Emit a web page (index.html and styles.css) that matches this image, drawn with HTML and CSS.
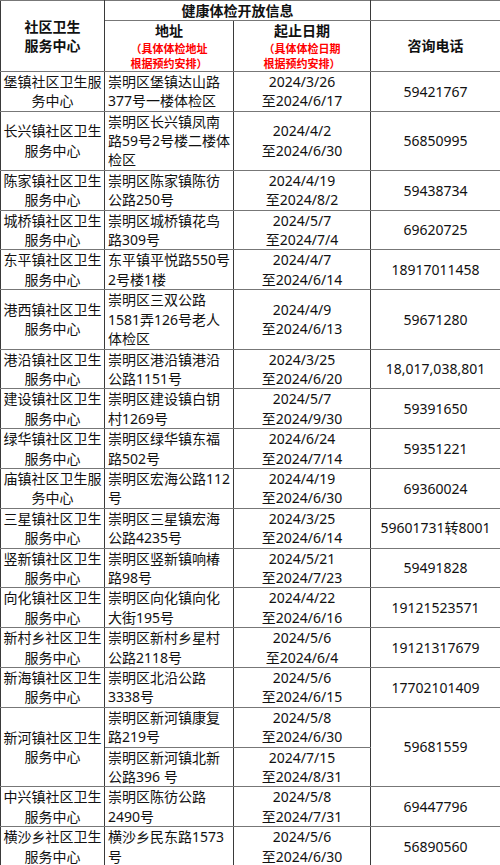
FILE: index.html
```html
<!DOCTYPE html>
<html lang="zh-CN">
<head>
<meta charset="utf-8">
<title>健康体检开放信息</title>
<link rel="stylesheet" href="styles.css">
</head>
<body>
<table class="sheet">
  <colgroup>
    <col class="c-name">
    <col class="c-addr">
    <col class="c-date">
    <col class="c-phone">
  </colgroup>
  <thead>
    <tr class="h1">
      <th rowspan="2" class="name">社区卫生<br>服务中心</th>
      <th colspan="2" class="group">健康体检开放信息</th>
      <th class="empty"></th>
    </tr>
    <tr class="h2">
      <th class="sub">地址<div class="note">（具体体检地址<br>根据预约安排）</div></th>
      <th class="sub">起止日期<div class="note">（具体体检日期<br>根据预约安排）</div></th>
      <th class="phone-h">咨询电话</th>
    </tr>
  </thead>
  <tbody>
    <tr><td class="name">堡镇社区卫生服<br>务中心</td><td class="addr">崇明区堡镇达山路<br>377号一楼体检区</td><td class="date">2024/3/26<br>至2024/6/17</td><td class="phone">59421767</td></tr>
    <tr><td class="name">长兴镇社区卫生<br>服务中心</td><td class="addr">崇明区长兴镇凤南<br>路59号2号楼二楼体<br>检区</td><td class="date">2024/4/2<br>至2024/6/30</td><td class="phone">56850995</td></tr>
    <tr><td class="name">陈家镇社区卫生<br>服务中心</td><td class="addr">崇明区陈家镇陈彷<br>公路250号</td><td class="date">2024/4/19<br>至2024/8/2</td><td class="phone">59438734</td></tr>
    <tr><td class="name">城桥镇社区卫生<br>服务中心</td><td class="addr">崇明区城桥镇花鸟<br>路309号</td><td class="date">2024/5/7<br>至2024/7/4</td><td class="phone">69620725</td></tr>
    <tr><td class="name">东平镇社区卫生<br>服务中心</td><td class="addr">东平镇平悦路550号<br>2号楼1楼</td><td class="date">2024/4/7<br>至2024/6/14</td><td class="phone">18917011458</td></tr>
    <tr><td class="name">港西镇社区卫生<br>服务中心</td><td class="addr">崇明区三双公路<br>1581弄126号老人<br>体检区</td><td class="date">2024/4/9<br>至2024/6/13</td><td class="phone">59671280</td></tr>
    <tr><td class="name">港沿镇社区卫生<br>服务中心</td><td class="addr">崇明区港沿镇港沿<br>公路1151号</td><td class="date">2024/3/25<br>至2024/6/20</td><td class="phone">18,017,038,801</td></tr>
    <tr><td class="name">建设镇社区卫生<br>服务中心</td><td class="addr">崇明区建设镇白钥<br>村1269号</td><td class="date">2024/5/7<br>至2024/9/30</td><td class="phone">59391650</td></tr>
    <tr><td class="name">绿华镇社区卫生<br>服务中心</td><td class="addr">崇明区绿华镇东福<br>路502号</td><td class="date">2024/6/24<br>至2024/7/14</td><td class="phone">59351221</td></tr>
    <tr><td class="name">庙镇社区卫生服<br>务中心</td><td class="addr">崇明区宏海公路112<br>号</td><td class="date">2024/4/19<br>至2024/6/30</td><td class="phone">69360024</td></tr>
    <tr><td class="name">三星镇社区卫生<br>服务中心</td><td class="addr">崇明区三星镇宏海<br>公路4235号</td><td class="date">2024/3/25<br>至2024/6/14</td><td class="phone">59601731转8001</td></tr>
    <tr><td class="name">竖新镇社区卫生<br>服务中心</td><td class="addr">崇明区竖新镇响椿<br>路98号</td><td class="date">2024/5/21<br>至2024/7/23</td><td class="phone">59491828</td></tr>
    <tr><td class="name">向化镇社区卫生<br>服务中心</td><td class="addr">崇明区向化镇向化<br>大街195号</td><td class="date">2024/4/22<br>至2024/6/16</td><td class="phone">19121523571</td></tr>
    <tr><td class="name">新村乡社区卫生<br>服务中心</td><td class="addr">崇明区新村乡星村<br>公路2118号</td><td class="date">2024/5/6<br>至2024/6/4</td><td class="phone">19121317679</td></tr>
    <tr><td class="name">新海镇社区卫生<br>服务中心</td><td class="addr">崇明区北沿公路<br>3338号</td><td class="date">2024/5/6<br>至2024/6/15</td><td class="phone">17702101409</td></tr>
    <tr><td class="name" rowspan="2">新河镇社区卫生<br>服务中心</td><td class="addr">崇明区新河镇康复<br>路219号</td><td class="date">2024/5/8<br>至2024/6/30</td><td class="phone" rowspan="2">59681559</td></tr>
    <tr><td class="addr">崇明区新河镇北新<br>公路396 号</td><td class="date">2024/7/15<br>至2024/8/31</td></tr>
    <tr><td class="name">中兴镇社区卫生<br>服务中心</td><td class="addr">崇明区陈彷公路<br>2490号</td><td class="date">2024/5/8<br>至2024/7/31</td><td class="phone">69447796</td></tr>
    <tr><td class="name">横沙乡社区卫生<br>服务中心</td><td class="addr">横沙乡民东路1573<br>号</td><td class="date">2024/5/6<br>至2024/6/30</td><td class="phone">56890560</td></tr>
  </tbody>
</table>
</body>
</html>
```

FILE: styles.css
```css
html, body {
  margin: 0;
  padding: 0;
  background: #ffffff;
}

body {
  font-family: "Noto Sans", "Noto Sans CJK SC", sans-serif;
  font-size: 14px;
  color: #111111;
}

.sheet {
  border-collapse: collapse;
  table-layout: fixed;
  width: 500px;
}

.c-name { width: 104px; }
.c-addr { width: 129px; }
.c-date { width: 137px; }
.c-phone { width: 130px; }

.sheet th,
.sheet td {
  border-top: 1px solid #777777;
  border-bottom: 1px solid #777777;
  border-left: 1px solid #3a3a3a;
  border-right: 1px solid #3a3a3a;
  padding: 0 2px;
  line-height: 19.4px;
  vertical-align: middle;
  text-align: center;
  font-weight: normal;
  white-space: nowrap;
  overflow: hidden;
}

.sheet th {
  font-weight: bold;
}

.sheet .addr {
  text-align: left;
  padding-left: 3px;
}

.sheet th.sub {
  vertical-align: top;
  padding-top: 0;
}

.note {
  color: #ff0000;
  font-size: 11px;
  line-height: 15px;
  font-weight: bold;
}
```
